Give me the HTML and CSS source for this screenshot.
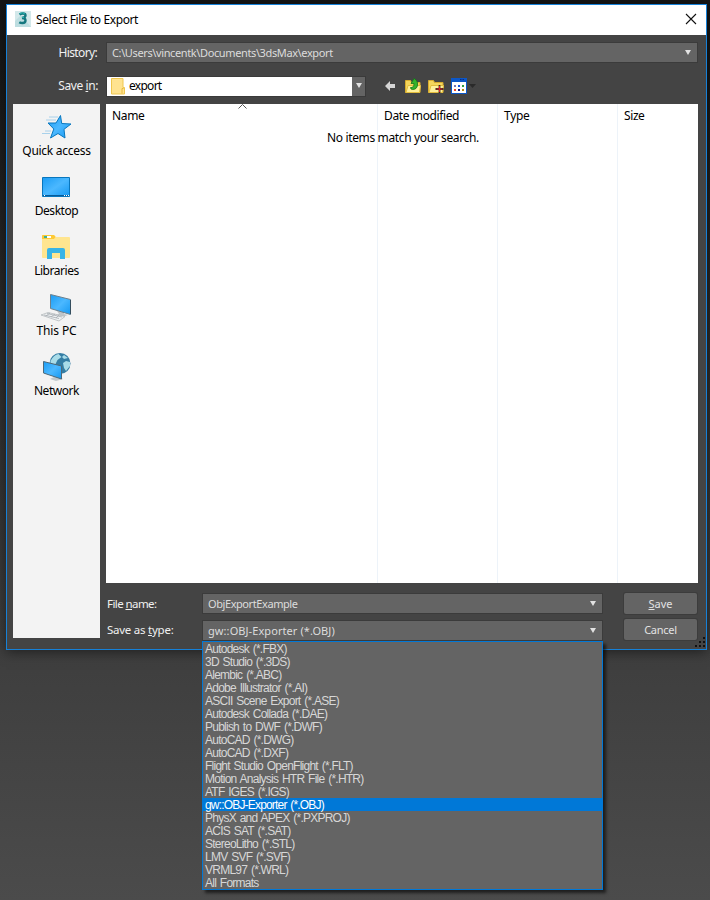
FILE: index.html
```html
<!DOCTYPE html>
<html lang="en">
<head>
<meta charset="utf-8">
<title>Select File to Export</title>
<link rel="stylesheet" href="styles.css">
</head>
<body>
<main class="dialog">
  <header class="titlebar">
    <svg class="logo" width="16" height="16" viewBox="0 0 16 16"><rect width="16" height="16" fill="#d3e8ea"/><path d="M0 10L6 4L16 16H0z" fill="#bddde0"/><path d="M4.500 3.500Q6 2.500 8 2.500q2.500 0 2.500 2T7 7q3.500 0 3.500 2.500T7.500 12q-2 0-3.200-.8" fill="none" stroke="#14777f" stroke-width="2.400"/><path d="M4.500 2.600Q8 1 10 3M7 6.500h2" fill="none" stroke="#27b5b1" stroke-width="1"/></svg>
    <h1 class="title">Select File to Export</h1>
    <svg class="close" width="12" height="12" viewBox="0 0 12 12"><path d="M1 1l10 10M11 1L1 11" stroke="#111" stroke-width="1.100"/></svg>
  </header>
  <div class="top-row history"><label class="label">History:</label><div class="field path"><span class="t-path">C:\Users\vincentk\Documents\3dsMax\export</span><i class="arrow"></i></div></div>
  <div class="top-row savein"><label class="label">Save <u>i</u>n:</label>
    <div class="folder-select"><div class="folder-value"><svg width="14" height="17" viewBox="0 0 14 17"><path d="M.5.500h11.500v9h1.500v6.500H.500z" fill="#ffe390" stroke="#efc64e"/><path d="M11 15.500v-5h1.500" fill="none" stroke="#e6b93e"/></svg><span class="t-folder">export</span></div><div class="folder-drop"><i class="arrow"></i></div></div>
    <div class="tools">
      <svg width="10" height="10" viewBox="0 0 10 10"><path d="M0 5L5 0v3h5v4H5v3z" fill="#d5d5d5"/></svg>
      <svg class="up" width="16" height="16" viewBox="0 0 16 16"><path d="M.5 2.500h5l1 2h8.500v10H.500z" fill="#f5d65c" stroke="#d8ac2d"/><path d="M1 14.500l2-7h12.500l-1 7z" fill="#fff09a" stroke="#e3bd3d"/><path d="M5.500 9.500Q9 10 9 5.500H6L9 .5q4 2 3.500 6.500-.5 4.500-5 4.500-2 0-2-2z" fill="#35b32c" stroke="#14751a" stroke-width=".8"/></svg>
      <svg class="new" width="16" height="16" viewBox="0 0 16 16"><path d="M.5 2.500h5l1 2h8.500v10H.500z" fill="#f5d65c" stroke="#d8ac2d"/><path d="M1 14.500l2-7h12.500l-1 7z" fill="#fff09a" stroke="#e3bd3d"/><path d="M11.500 7v8M7.500 11h8" stroke="#3a2a20" stroke-width="1.800"/><path d="M11.500 8v6M8.500 11h6" stroke="#e32222" stroke-width="1"/></svg>
      <svg class="view" width="25" height="16" viewBox="0 0 25 16"><path d="M0 0h16v16H0z" fill="#0c57c7"/><path d="M1 4h14v11H1z" fill="#fff"/><path d="M9 1.500h1.500M11.500 1.500H13" stroke="#0a2d85"/><path d="M3 7h2v2H3z" fill="#7777b5"/><path d="M7 7h2v2H7z" fill="#1554e0"/><path d="M11 7h2v2h-2z" fill="#2b9f40"/><path d="M3 11h2v2H3z" fill="#f04420"/><path d="M7 11h2v2H7z" fill="#0a1780"/><path d="M11 11h2v2h-2z" fill="#b98912"/><path d="M18 6h7l-3.500 4z" fill="#2a2a2a"/></svg>
    </div>
  </div>
  <div class="browser">
    <nav class="places">
      <div class="place"><svg width="32" height="32" viewBox="0 0 32 32"><defs><linearGradient id="blue" x1="0" y1="0" x2="1" y2="1"><stop stop-color="#1a9cf4"/><stop offset=".5" stop-color="#4bb8ff"/><stop offset="1" stop-color="#1498f2"/></linearGradient></defs><path d="M20.500 4.500l1.200 8 9.300.500-7 5.300 1 8.700-7-4.500-7.500 4.500 3.300-9-5.800-6h8z" fill="url(#blue)" stroke="#0877bf"/><path d="M9 6h9M6 9h10M5 20h6M2 22.500h8" stroke="#94c8e8" stroke-width=".8"/></svg><span class="p1">Quick access</span></div>
      <div class="place"><svg width="32" height="32" viewBox="0 0 32 32"><path d="M2.500 6.500h27v19h-27z" fill="url(#blue)" stroke="#0876bd"/><path d="M3 24.500h26" stroke="#075a98"/><path d="M4 24.500h1m19 0h1m1 0h1m1 0h1" stroke="#fff"/></svg><span class="p2">Desktop</span></div>
      <div class="place"><svg width="32" height="32" viewBox="0 0 32 32"><path d="M2 5q0-1 1-1h11l2 2h13q1 0 1 1v19q0 1-1 1H3q-1 0-1-1z" fill="#ffe58f"/><path d="M2 8V5q0-1 1-1h11l1.500 2-1.500 2z" fill="#fdc936"/><path d="M4 5h7v2H4z" fill="#fff"/><path d="M4 5h3v2H4z" fill="#3bb29a"/><path d="M7 28V19q0-2 2-2h14q2 0 2 2v9h-5v-6h-8v6z" fill="#39b4e5"/></svg><span class="p3">Libraries</span></div>
      <div class="place"><svg width="32" height="32" viewBox="0 0 32 32"><path d="M17 20l7 1v2l4 1-6 2-6-2 3-1z" fill="#bfc5c9"/><path d="M10.500 3.500l20 5v15l-20-6z" fill="url(#blue)" stroke="#6c818e"/><path d="M30.500 9v14" stroke="#344d5d"/><path d="M1 24l7-2.500 17 4-6 4.500z" fill="#eef1f2" stroke="#b5babd" stroke-width=".8"/><path d="M4 24l15 3.500M7 22.500l15 3.500M6 25l4-3m1 4l4-3m1 4l3-3" stroke="#a7adb2" stroke-width=".8"/></svg><span class="p4">This PC</span></div>
      <div class="place"><svg width="32" height="32" viewBox="0 0 32 32"><circle cx="20" cy="12.500" r="10.500" fill="#347da4"/><path d="M10.500 10q3-6 8-7l3 3-4 3-2 4-5 1zM23 12l3-2 4 1v4l-4 5-2-3zM24 4l4 3-4 1-2-2z" fill="#a9dce8"/><path d="M12 27l4-2 4 1 3 2-7 2-6-2z" fill="#c1c8cc"/><path d="M3.500 10.500l18 4.500v13l-18-6z" fill="url(#blue)" stroke="#4d6979"/></svg><span class="p5">Network</span></div>
    </nav>
    <section class="files">
      <div class="cell name"><span class="c1">Name</span><svg class="sort" width="9" height="5" viewBox="0 0 9 5"><path d="M.5 4.500l4-4 4 4" fill="none" stroke="#555"/></svg></div>
      <div class="cell"><span class="c2">Date modified</span></div>
      <div class="cell"><span class="c3">Type</span></div>
      <div class="cell last"><span class="c4">Size</span></div>
      <p class="empty">No items match your search.</p>
    </section>
  </div>
  <footer class="bottom">
    <label class="l1">File <u>n</u>ame:</label><div class="field"><span class="f1">ObjExportExample</span><i class="arrow"></i></div><button class="btn"><span class="b1"><u>S</u>ave</span></button>
    <label class="l2">Save as <u>t</u>ype:</label><div class="field type"><span class="f2">gw::OBJ-Exporter (*.OBJ)</span><i class="arrow"></i></div><button class="btn"><span class="b2">Cancel</span></button>
  </footer>
  <svg class="grip" width="11" height="11" viewBox="0 0 11 11"><path d="M8 0h2v2H8zM4 4h2v2H4zM8 4h2v2H8zM0 8h2v2H0zM4 8h2v2H4zM8 8h2v2H8z" fill="#111"/></svg>
</main>
<ul class="menu">
  <li>Autodesk (*.FBX)</li><li>3D Studio (*.3DS)</li><li>Alembic (*.ABC)</li><li>Adobe Illustrator (*.AI)</li><li>ASCII Scene Export (*.ASE)</li><li>Autodesk Collada (*.DAE)</li><li>Publish to DWF (*.DWF)</li><li>AutoCAD (*.DWG)</li><li>AutoCAD (*.DXF)</li><li>Flight Studio OpenFlight (*.FLT)</li><li>Motion Analysis HTR File (*.HTR)</li><li>ATF IGES (*.IGS)</li><li class="selected">gw::OBJ-Exporter (*.OBJ)</li><li>PhysX and APEX (*.PXPROJ)</li><li>ACIS SAT (*.SAT)</li><li>StereoLitho (*.STL)</li><li>LMV SVF (*.SVF)</li><li>VRML97 (*.WRL)</li><li>All Formats</li>
</ul>
</body>
</html>
```
FILE: styles.css
```css
* { box-sizing: border-box; }
html { background: #4b4b4b; }
body { margin: 0; height: 900px; padding: 4px 3px 0 6px; overflow: hidden; background: linear-gradient(#161616 0, #1b1b1b 110px, #303030 400px, #3e3e3e 650px, #4b4b4b 900px); font: 12px/16px "Noto Sans", sans-serif; }
.dialog { position: relative; width: 701px; height: 646px; border: 1px solid #1681d8; background: #444; box-shadow: 0 2px 12px rgba(0,0,0,.5); }
.titlebar { height: 30px; background: #fff; display: flex; align-items: center; padding: 0 9px 0 8px; }
.logo { margin-top: -2px; }
.title { margin: 0 auto 0 5px; font-size: 12px; font-weight: 400; letter-spacing: -.4px; white-space: nowrap; color: #000; }
.close { margin-top: -2px; }
.top-row { display: flex; color: #f0f0f0; }
.label { width: 91px; text-align: right; font-size: 12px; letter-spacing: -.42px; line-height: 20px; margin-right: 8px; white-space: nowrap; }
.history { padding: 7px 8px 0 0; }
.history .label { padding: 1px 1px 0 0; letter-spacing: -.65px; }
.field { display: flex; align-items: center; justify-content: space-between; height: 21px; padding: 0 6px 0 5px; border: 1px solid #3b3b3b; background: #646464; color: #dcdcdc; font-size: 11px; line-height: 18px; white-space: nowrap; }
.path { flex: 1; }
.t-path { letter-spacing: -.38px; }
.t-folder { letter-spacing: -.72px; margin-top: -1px; }
.arrow { width: 0; height: 0; margin-top: -1px; border: 3.5px solid transparent; border-top: 5px solid #e2e2e2; border-bottom: 0; }
.savein { padding-top: 13px; height: 41px; }
.folder-select { display: flex; width: 260px; height: 21px; border: 1px solid #3a3a3a; }
.folder-value { display: flex; align-items: center; gap: 4px; width: 245px; padding-left: 4px; background: #fff; color: #000; }
.folder-drop { flex: 1; background: #646464; display: flex; justify-content: center; padding-top: 7px; }
.tools { display: flex; align-items: center; height: 20px; padding-left: 19px; }
.up { margin-left: 10px; }
.new { margin-left: 7px; }
.view { margin-left: 7px; }
.browser { display: flex; gap: 6px; padding: 0 8px 0 6px; height: 534px; }
.places { width: 87px; background: #f3f3f3; padding-top: 7px; }
.place { height: 60px; display: flex; flex-direction: column; align-items: center; line-height: 16px; white-space: nowrap; color: #000; }
.place svg { margin: 0 1px 0 0; }
.p1 { letter-spacing: -.28px; }
.p2, .p3, .p5 { letter-spacing: -.45px; }
.p4 { letter-spacing: -.12px; }
.files { position: relative; display: grid; grid-template-columns: 272px 120px 120px 80px; width: 592px; height: 479px; background: #fff; color: #000; }
.cell { position: relative; padding: 4px 0 0 6px; border-right: 1px solid #edf3f9; white-space: nowrap; }
.c1 { letter-spacing: -.35px; }
.c2 { letter-spacing: -.38px; }
.c3 { letter-spacing: -.3px; }
.c4 { letter-spacing: -.4px; }
.last { border: 0; }
.sort { position: absolute; left: 132px; top: 0; }
.empty { position: absolute; left: 221px; top: 26px; margin: 0; white-space: nowrap; letter-spacing: -.36px; }
.bottom { display: grid; grid-template-columns: 95px 401px 95px; grid-template-rows: 21px 21px; row-gap: 5px; width: 591px; margin: -45px 0 0 100px; color: #f0f0f0; line-height: 22px; white-space: nowrap; }
.l1, .l2 { font-size: 11.5px; }
.l1 { letter-spacing: -.58px; }
.l2 { letter-spacing: -.25px; }
.bottom .type { margin-top: 1px; }
.f1 { letter-spacing: -.42px; }
.f2 { letter-spacing: .08px; }
.b2 { letter-spacing: -.25px; }
.btn { margin-left: 21px; width: 73px; height: 21px; padding: 0; border: 0; border-radius: 2px; background: #646464; color: #e2e2e2; font: 11px/20px "Noto Sans", sans-serif; box-shadow: 0 0 0 1px #3c3c3c; }
.grip { position: absolute; right: 0; bottom: 1px; }
.menu { position: absolute; left: 202px; top: 641px; width: 401px; height: 249px; margin: 0; padding: 0; border: 1px solid #0078d7; list-style: none; background: #646464; color: #d7d7d7; font: 12px/13px "Liberation Sans", sans-serif; letter-spacing: -.76px; word-spacing: 1.2px; box-shadow: 3px 3px 3px rgba(0,0,0,.6); }
.menu li { height: 13px; padding-left: 2px; white-space: nowrap; line-height: 14px; }
.menu .selected { background: #0078d7; color: #fff; letter-spacing: -.82px; }
```
